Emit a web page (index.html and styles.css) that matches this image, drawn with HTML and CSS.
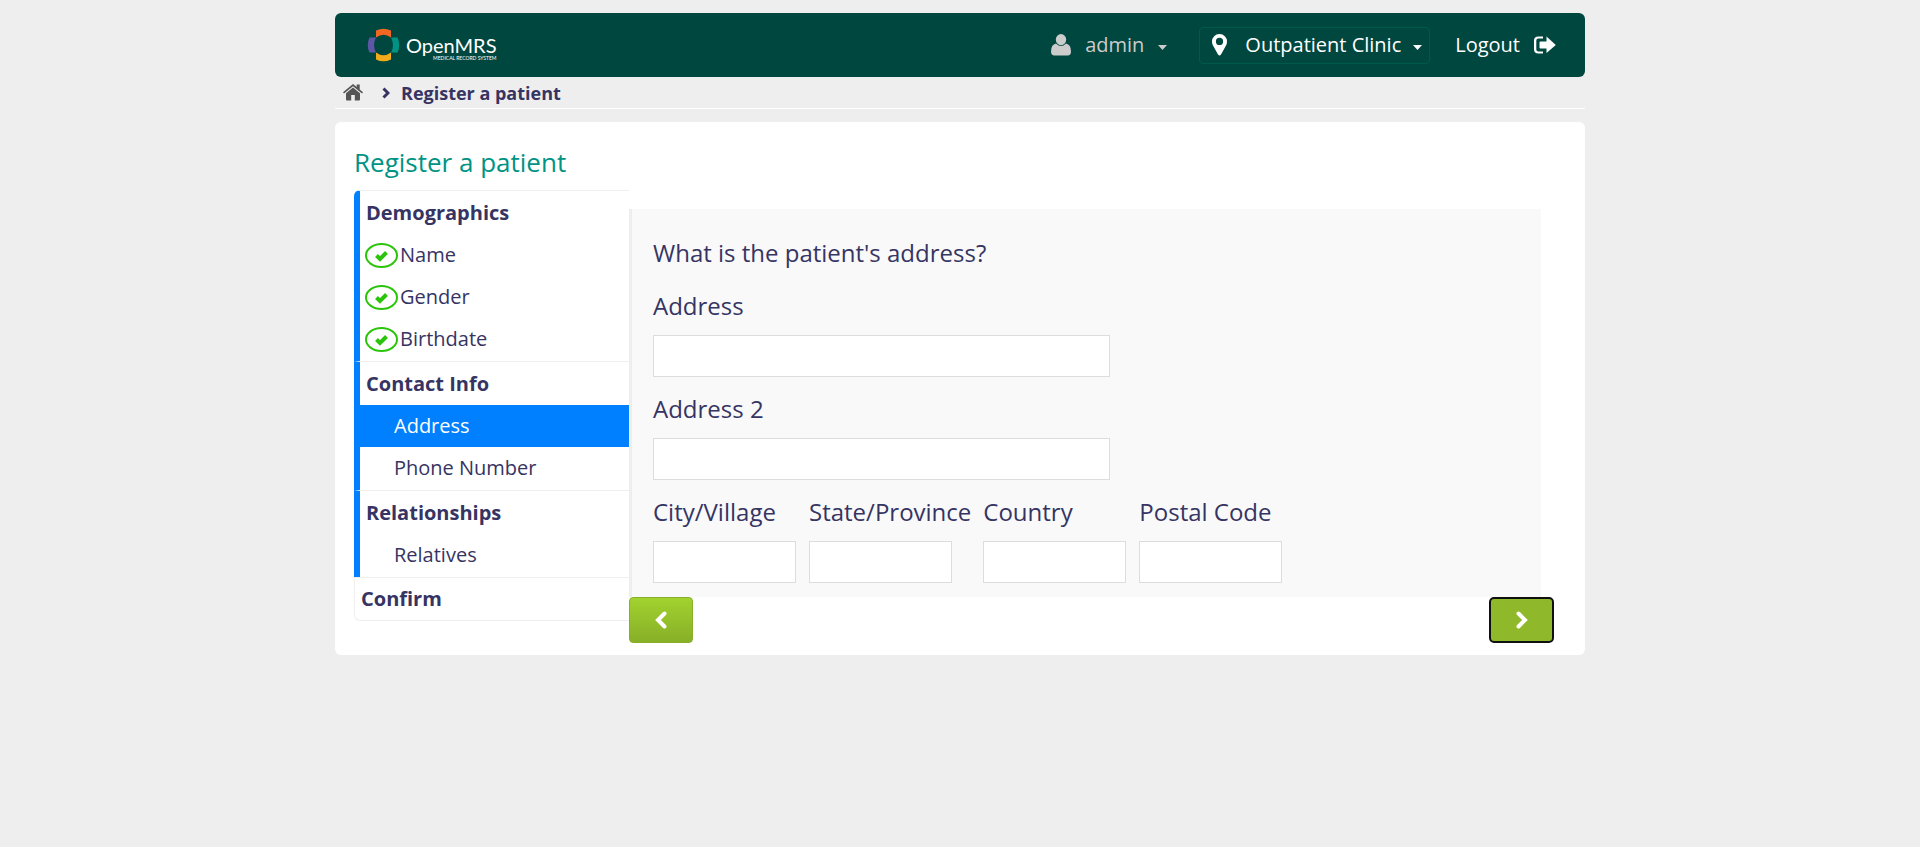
FILE: index.html
```html
<!DOCTYPE html>
<html lang="en">
<head>
<meta charset="utf-8">
<title>Register a patient</title>
<link rel="stylesheet" href="styles.css">
</head>
<body>
<div class="page">
  <header class="topbar">
    <a class="brand" href="#">
      <svg class="brand-mark" viewBox="0 0 32 34" aria-hidden="true">
        <path fill="#f26722" d="M8.500 2.500Q16-1.200 23.500 2.500V9.500Q16 4 8.500 9.500Z"/>
        <path fill="#f4ab1b" d="M8.500 31.500Q16 35.200 23.500 31.500V24.500Q16 30 8.500 24.500Z"/>
        <path fill="#5e57a6" d="M2 9.500Q-1.500 17 2 24.500H8.500Q4.500 17 8.500 9.500Z"/>
        <path fill="#009384" d="M30 9.500Q33.500 17 30 24.500H23.500Q27.500 17 23.500 9.500Z"/>
      </svg>
      <span class="brand-text"><span class="brand-name">OpenMRS</span><span class="brand-sub">MEDICAL RECORD SYSTEM</span></span>
    </a>
    <nav class="user-menu">
      <button class="account" type="button">
        <svg class="icon-user" viewBox="0 0 20 22" aria-hidden="true"><path d="M10 0a5.200 5.600 0 0 1 0 11.200A5.200 5.600 0 0 1 10 0ZM5 9.500Q10 14.500 15 9.500Q20 10.500 20 17.500Q20 21.500 16.500 21.500H3.500Q0 21.500 0 17.500Q0 10.500 5 9.500Z"/></svg>
        <span>admin</span>
        <svg class="icon-caret" viewBox="0 0 9 9" aria-hidden="true"><path d="M0 4h9L4.500 9Z"/></svg>
      </button>
      <button class="location" type="button">
        <svg class="icon-pin" viewBox="0 0 15 22" aria-hidden="true"><path fill-rule="evenodd" d="M7.500 0A7.400 7.400 0 0 1 15 7.500Q15 9.500 14 11.500L9 20.500Q7.500 22.500 6 20.500L1 11.500Q0 9.500 0 7.500A7.400 7.400 0 0 1 7.500 0ZM7.500 3.800a3.600 3.600 0 1 0 0 7.200a3.600 3.600 0 0 0 0-7.200Z"/></svg>
        <span>Outpatient Clinic</span>
        <svg class="icon-caret" viewBox="0 0 9 9" aria-hidden="true"><path d="M0 4h9L4.500 9Z"/></svg>
      </button>
      <a class="logout" href="#">
        <span>Logout</span>
        <svg class="icon-logout" viewBox="0 0 22 18" aria-hidden="true"><path d="M9 .5V2.500H4.500Q2.300 2.500 2.300 4.500V13.500Q2.300 15.500 4.500 15.500H9V17.500H4.500Q0 17.500 0 13.500V4.500Q0 .5 4.500 .5ZM12.500 .5L21.800 9L12.500 17V12.500H6.500Q5.500 12.500 5.500 11.500V6.500Q5.500 5.500 6.500 5.500H12.500Z"/></svg>
      </a>
    </nav>
  </header>

  <nav class="breadcrumbs" aria-label="Breadcrumb">
    <a class="home" href="#" aria-label="Home">
      <svg viewBox="0 0 20 17" aria-hidden="true"><path d="M10 3.500L17 9.300V15.500Q17 16.500 16 16.500H11.800V11H8.200V16.500H4Q3 16.500 3 15.500V9.300ZM10 0L13.700 3V.6H16.700V5.500L20 8.300L19 9.500L10 2.200L1 9.500L0 8.300Z"/></svg>
    </a>
    <svg class="crumb-arrow" viewBox="0 0 8 12" aria-hidden="true"><path d="M1.500 1.500L6 6L1.500 10.500"/></svg>
    <span>Register a patient</span>
  </nav>

  <main class="card">
    <h1>Register a patient</h1>
    <div class="wizard">
      <ul class="steps">
        <li class="section visited">
          <span class="section-title">Demographics</span>
          <ul>
            <li class="done"><svg class="icon-done" viewBox="0 0 33 25" aria-hidden="true"><ellipse cx="16.500" cy="12.500" rx="15.500" ry="11.500"/><path d="M11.500 12.500L15 16L21.500 9.500"/></svg>Name</li>
            <li class="done"><svg class="icon-done" viewBox="0 0 33 25" aria-hidden="true"><ellipse cx="16.500" cy="12.500" rx="15.500" ry="11.500"/><path d="M11.500 12.500L15 16L21.500 9.500"/></svg>Gender</li>
            <li class="done"><svg class="icon-done" viewBox="0 0 33 25" aria-hidden="true"><ellipse cx="16.500" cy="12.500" rx="15.500" ry="11.500"/><path d="M11.500 12.500L15 16L21.500 9.500"/></svg>Birthdate</li>
          </ul>
        </li>
        <li class="section visited">
          <span class="section-title">Contact Info</span>
          <ul>
            <li class="current">Address</li>
            <li>Phone Number</li>
          </ul>
        </li>
        <li class="section visited">
          <span class="section-title">Relationships</span>
          <ul>
            <li>Relatives</li>
          </ul>
        </li>
        <li class="section">
          <span class="section-title">Confirm</span>
        </li>
      </ul>

      <form class="form">
        <fieldset class="panel">
          <legend class="question">What is the patient's address?</legend>
          <div class="field wide">
            <label for="address1">Address</label>
            <input id="address1" type="text">
          </div>
          <div class="field wide">
            <label for="address2">Address 2</label>
            <input id="address2" type="text">
          </div>
          <div class="field-row">
            <div class="field"><label for="city">City/Village</label><input id="city" type="text"></div>
            <div class="field"><label for="state">State/Province</label><input id="state" type="text"></div>
            <div class="field"><label for="country">Country</label><input id="country" type="text"></div>
            <div class="field"><label for="postal">Postal Code</label><input id="postal" type="text"></div>
          </div>
        </fieldset>
        <div class="actions">
          <button class="prev" type="button" aria-label="Previous"><svg viewBox="0 0 12 18" aria-hidden="true"><path d="M9.500 2.500L3 9L9.500 15.500"/></svg></button>
          <button class="next" type="button" aria-label="Next"><svg viewBox="0 0 12 18" aria-hidden="true"><path d="M2.500 2.500L9 9L2.500 15.500"/></svg></button>
        </div>
      </form>
    </div>
  </main>
</div>
</body>
</html>
```

FILE: styles.css
```css
* { box-sizing: border-box; }

body {
  margin: 0;
  background: #eeeeee;
  color: #363463;
  font-family: "Open Sans", "Noto Sans", sans-serif;
  font-weight: 400;
}

ul { list-style: none; margin: 0; padding: 0; }
a { color: inherit; text-decoration: none; }
button { font: inherit; color: inherit; cursor: pointer; }
svg { display: block; flex: none; }

.page {
  max-width: 1250px;
  margin: 0 auto;
  padding-top: 13px;
}

/* Top bar */
.topbar {
  display: flex;
  align-items: center;
  justify-content: space-between;
  height: 64px;
  padding: 0 29px 0 32px;
  border-radius: 6px;
  background: #00473f;
  color: #fff;
}

.brand { display: flex; align-items: center; gap: 6px; }
.brand-mark { width: 33px; height: 34px; }
.brand-text {
  display: flex;
  flex-direction: column;
  padding-top: 6px;
  font-family: Lato, sans-serif;
  font-weight: 400;
}
.brand-name { font-size: 20px; line-height: 20px; }
.brand-sub { align-self: flex-end; font-size: 5px; line-height: 6px; }

.user-menu {
  display: flex;
  align-items: center;
  font-size: 20px;
  line-height: 28px;
}
.account, .location, .logout { display: flex; align-items: center; }
.account {
  gap: 14px;
  margin-right: 32px;
  padding: 0;
  border: 0;
  background: none;
  color: #ccc;
}
.location {
  height: 37px;
  gap: 12px;
  margin-right: 25px;
  padding: 0 7px 0 12px;
  border: 1px solid #005a4b;
  border-radius: 4px;
  background: none;
}
.location .icon-pin { margin-right: 6px; }
.logout { gap: 14px; }
.user-menu svg { fill: currentColor; }
.icon-user { width: 20px; height: 22px; }
.icon-pin { width: 15px; height: 22px; }
.icon-logout { width: 22px; height: 18px; }
.icon-caret { width: 9px; height: 9px; }

/* Breadcrumbs */
.breadcrumbs {
  display: flex;
  align-items: center;
  height: 32px;
  padding: 0 8px;
  border-bottom: 1px solid #fff;
  font-size: 18px;
  font-weight: 700;
}
.home svg { width: 20px; height: 17px; fill: #555; }
.crumb-arrow {
  width: 8px;
  height: 12px;
  margin: 0 11px 0 19px;
  fill: none;
  stroke: #363463;
  stroke-width: 3;
}

/* Card */
.card {
  margin-top: 13px;
  padding: 20px 19px 12px;
  border-radius: 6px;
  background: #fff;
}
h1 {
  margin: 0 0 8px;
  color: #009384;
  font-size: 26px;
  line-height: 40px;
  font-weight: 400;
}

.wizard { display: flex; align-items: flex-start; }

.steps {
  flex: 0 0 275px;
  font-size: 20px;
  line-height: 42px;
}
.section {
  border-top: 1px solid #eee;
  border-left: 1px solid #eee;
}
.section.visited { border-left: 6px solid #007fff; }
.section:first-child { border-top-left-radius: 6px; }
.section:last-child {
  border-bottom: 1px solid #eee;
  border-bottom-left-radius: 6px;
}
.section-title { display: block; padding-left: 6px; font-weight: 700; }
.visited .section-title { line-height: 43px; }
.section ul { padding-bottom: 1px; }
.section li {
  display: flex;
  align-items: center;
  height: 42px;
  padding-left: 34px;
}
.section .done { gap: 2px; padding-left: 5px; }
.section .current { background: #007fff; color: #fff; }
.icon-done {
  width: 33px;
  height: 25px;
  fill: none;
  stroke: #2ac40a;
  stroke-width: 2;
}
.icon-done path { stroke-width: 4; }

/* Form */
.form { flex: 1; padding-top: 19px; }
.panel {
  margin: 0 25px 0 0;
  padding: 23px 20px 14px 21px;
  border: 0;
  border-left: 3px solid #eee;
  background: #f9f9f9;
  font-size: 24px;
  line-height: 42px;
}
.question { float: left; width: 100%; padding: 0; }
.field { display: flex; flex-direction: column; min-width: 144px; }
.field label { padding: 12px 0 9px; line-height: 40px; }
.field input {
  width: 143px;
  height: 42px;
  padding: 4px 8px;
  border: 1px solid #ddd;
  background: #fff;
  color: inherit;
  font: inherit;
}
.field.wide { clear: both; }
.wide input { width: 457px; }
.field-row { display: flex; gap: 12px; }

.actions {
  display: flex;
  justify-content: space-between;
  margin-right: 12px;
}
.actions button {
  display: flex;
  align-items: center;
  justify-content: center;
  width: 64px;
  height: 46px;
  padding: 0;
  border: 1px solid #88af28;
  border-radius: 4px;
  background: linear-gradient(#a1d22e, #88af28);
}
.actions .next {
  width: 65px;
  border: 2px solid #101010;
  border-radius: 5px;
  background: #8fb82a;
}
.actions svg {
  width: 12px;
  height: 18px;
  fill: none;
  stroke: #fff;
  stroke-width: 4;
  stroke-linecap: round;
}
```
